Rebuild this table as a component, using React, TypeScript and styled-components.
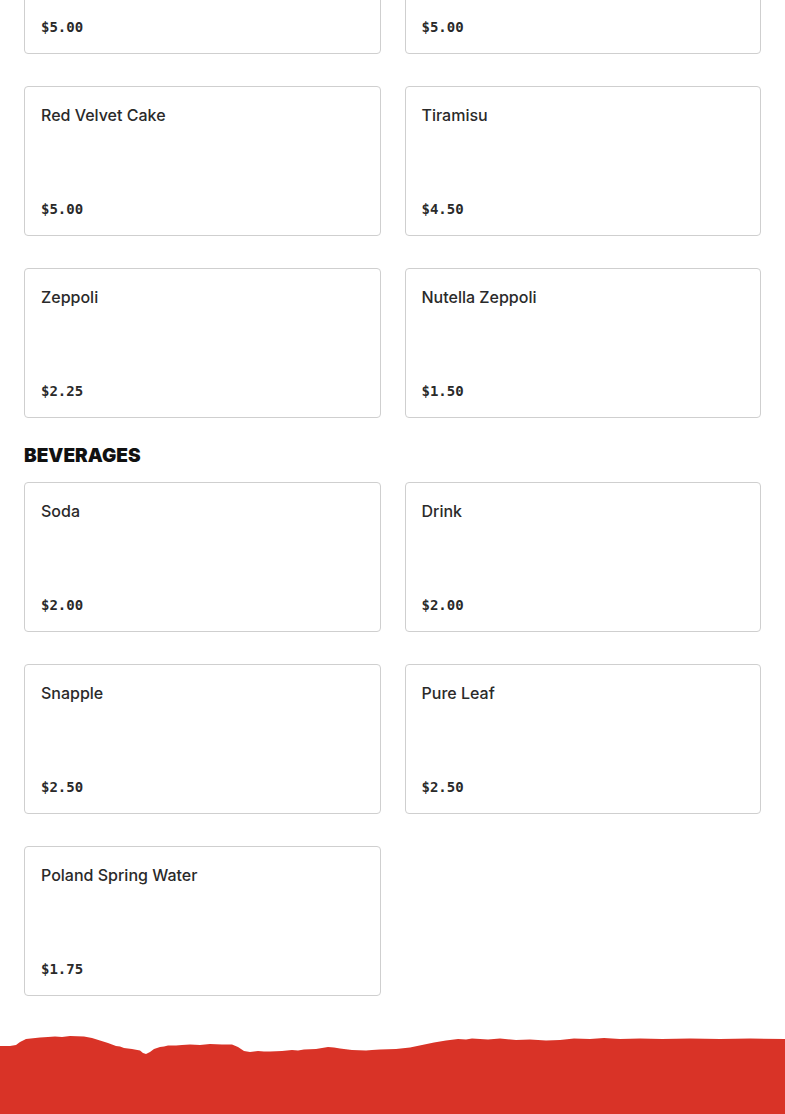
import React from 'react'
import styled, { createGlobalStyle } from 'styled-components'

const GlobalStyle = createGlobalStyle`
  body {
    margin: 0;
    background: #ffffff;
    font-family: Inter, "Noto Sans", sans-serif;
  }
`

const Page = styled.main`
  display: flex;
  flex-direction: column;
  overflow: hidden;
`

const Menu = styled.div`
  padding: 0 24px;
  margin-top: -96px;
`

const Section = styled.section`
  display: flex;
  flex-direction: column;
`

const SectionTitle = styled.h2`
  margin: 26px 0 14px;
  font-family: Inter, "Noto Sans", sans-serif;
  font-weight: 900;
  font-size: 19px;
  line-height: 24px;
  color: #111;
  text-transform: uppercase;
`

const Grid = styled.div`
  display: grid;
  grid-template-columns: 1fr 1fr;
  column-gap: 24px;
  row-gap: 32px;
`

const Card = styled.article`
  box-sizing: border-box;
  height: 150px;
  padding: 16px;
  border: 1px solid #cfcfcf;
  border-radius: 4px;
  background: #fff;
  display: flex;
  flex-direction: column;
  justify-content: space-between;
`

const ItemName = styled.h3`
  margin: 0;
  font-family: Inter, "Noto Sans", sans-serif;
  font-weight: 500;
  font-size: 16px;
  line-height: 24px;
  color: #2a2a2a;
`

const Price = styled.span`
  font-family: "DejaVu Sans Mono", "Liberation Mono", monospace;
  font-weight: 700;
  font-size: 14px;
  line-height: 20px;
  color: #2a2a2a;
`

const Footer = styled.footer`
  margin-top: 38px;
  display: flex;
  flex-direction: column;
`

const TornEdge = styled.svg`
  display: block;
  width: 100%;
  height: 24px;
`

const FooterBody = styled.div`
  background: #d93327;
  height: 180px;
  margin-top: -1px;
`

type Item = { name: string; price: string }

const desserts: Item[] = [
  { name: 'Cannoli', price: '$5.00' },
  { name: 'Cheesecake', price: '$5.00' },
  { name: 'Red Velvet Cake', price: '$5.00' },
  { name: 'Tiramisu', price: '$4.50' },
  { name: 'Zeppoli', price: '$2.25' },
  { name: 'Nutella Zeppoli', price: '$1.50' },
]

const beverages: Item[] = [
  { name: 'Soda', price: '$2.00' },
  { name: 'Drink', price: '$2.00' },
  { name: 'Snapple', price: '$2.50' },
  { name: 'Pure Leaf', price: '$2.50' },
  { name: 'Poland Spring Water', price: '$1.75' },
]

// rough outline of the torn paper edge, y measured from the top of the svg
const edge = [
  [0, 12], [10, 12], [16, 11], [20, 8], [26, 5], [40, 3.5], [48, 3], [55, 2.5], [62, 3],
  [70, 2], [84, 2.5], [92, 4], [100, 6.5], [108, 9], [116, 12], [120, 12.5], [124, 14],
  [132, 15], [140, 16.5], [143, 19], [146, 20], [150, 18], [154, 15], [160, 13],
  [164, 12.5], [168, 11.5], [176, 11.5], [182, 11], [190, 10.5], [200, 11], [210, 10],
  [222, 10.5], [232, 10.5], [238, 13], [244, 17], [250, 18], [258, 17], [264, 17.5],
  [270, 17.5], [282, 17], [292, 16], [298, 16.5], [304, 15.5], [316, 15], [328, 13],
  [334, 13.5], [340, 14.5], [352, 16], [366, 16.5], [372, 16], [380, 15.5], [396, 15],
  [410, 13.5], [422, 11], [434, 8.5], [446, 6.5], [458, 5], [466, 5.5], [472, 4.5],
  [488, 5.5], [500, 4.5], [516, 6], [530, 5.5], [546, 6.5], [560, 6], [574, 4.5],
  [590, 5], [604, 4], [620, 5], [640, 4.5], [662, 5], [690, 4.5], [720, 5], [750, 4.5],
  [785, 5],
]

const TornTop = () => {
  const d =
    edge.map(([x, y], i) => `${i === 0 ? 'M' : 'L'}${x} ${y}`).join(' ') + ' L785 24 L0 24 Z'
  return (
    <TornEdge viewBox="0 0 785 24" preserveAspectRatio="none">
      <path d={d} fill="#d93327" />
    </TornEdge>
  )
}

function MenuSection({ title, items }: { title?: string; items: Item[] }) {
  return (
    <Section>
      {title && <SectionTitle>{title}</SectionTitle>}
      <Grid>
        {items.map((item) => (
          <Card key={item.name}>
            <ItemName>{item.name}</ItemName>
            <Price>{item.price}</Price>
          </Card>
        ))}
      </Grid>
    </Section>
  )
}

export default function App() {
  return (
    <Page>
      <GlobalStyle />
      <Menu>
        <MenuSection items={desserts} />
        <MenuSection title="Beverages" items={beverages} />
      </Menu>
      <Footer>
        <TornTop />
        <FooterBody />
      </Footer>
    </Page>
  )
}
